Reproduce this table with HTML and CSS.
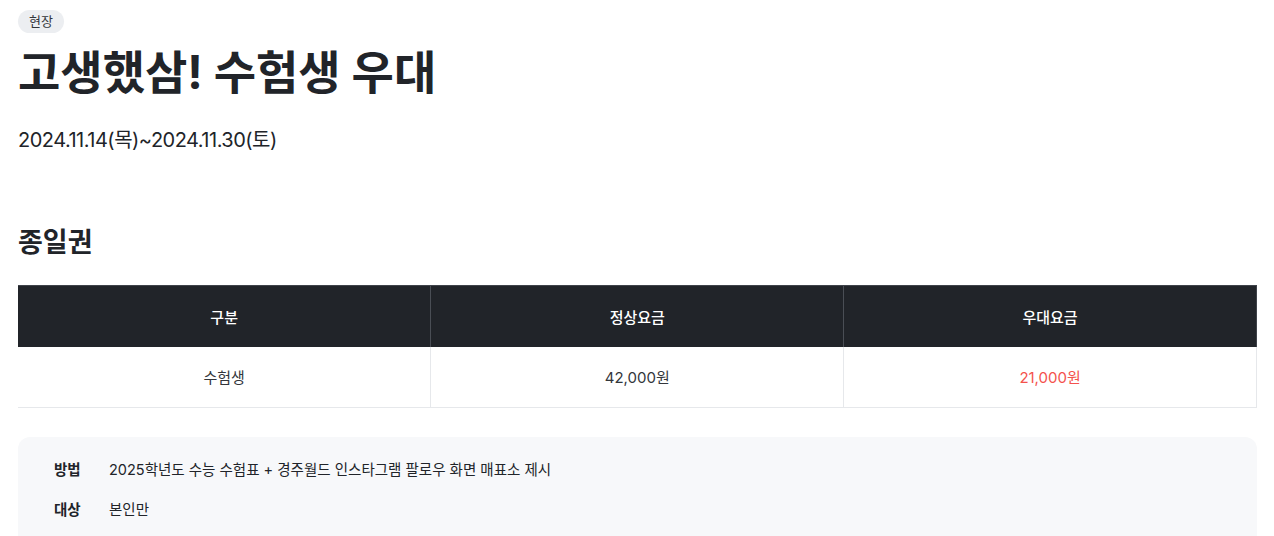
FILE: index.html
```html
<!DOCTYPE html>
<html lang="ko">
<head>
    <meta charset="UTF-8">
    <title>고생했삼! 수험생 우대</title>
    <link rel="stylesheet" href="styles.css">
</head>
<body>
    <div id="base">
        <span class="badge">현장</span>
        <h1 class="title">고생했삼! 수험생 우대</h1>
        <p class="period">2024.11.14(목)~2024.11.30(토)</p>

        <h2 class="section_title">종일권</h2>

        <table class="price_table">
            <thead>
                <tr>
                    <th>구분</th>
                    <th>정상요금</th>
                    <th>우대요금</th>
                </tr>
            </thead>
            <tbody>
                <tr>
                    <td>수험생</td>
                    <td>42,000원</td>
                    <td class="sale">21,000원</td>
                </tr>
            </tbody>
        </table>

        <div class="info_box">
            <div class="info_row">
                <span class="info_label">방법</span>
                <span class="info_text">2025학년도 수능 수험표 + 경주월드 인스타그램 팔로우 화면 매표소 제시</span>
            </div>
            <div class="info_row">
                <span class="info_label">대상</span>
                <span class="info_text">본인만</span>
            </div>
        </div>
    </div>
</body>
</html>
```

FILE: styles.css
```css
* {
    box-sizing: border-box;
    font-family: Inter, "Noto Sans CJK KR", sans-serif;
}

body {
    margin: 0;
    color: #212429;
    background: #fff;
}

#base {
    padding: 10px 17px 0 18px;
    display: flex;
    flex-direction: column;
    align-items: flex-start;
}

.badge {
    display: inline-block;
    background-color: #eceef1;
    color: #33363b;
    font-size: 13px;
    line-height: 23px;
    height: 23px;
    padding: 0 11px;
    border-radius: 12px;
}

.title {
    margin: 11px 0 0;
    font-size: 46px;
    font-weight: 700;
    line-height: 56px;
    letter-spacing: 0;
}

.period {
    margin: 26px 0 0;
    font-size: 20px;
    line-height: 28px;
    letter-spacing: -0.5px;
}

.section_title {
    margin: 72px 0 0;
    font-size: 27px;
    font-weight: 700;
    line-height: 34px;
    letter-spacing: 0;
}

.price_table {
    margin-top: 25px;
    width: 100%;
    border-collapse: collapse;
    table-layout: fixed;
    font-size: 15px;
}

.price_table th {
    background-color: #212429;
    color: #fff;
    font-weight: 500;
    height: 61px;
    border-top: 1px solid #3f434a;
    border-left: 1px solid #4a4e55;
}

.price_table th:first-child {
    border-left: none;
}

.price_table th:last-child {
    border-right: 1px solid #3f434a;
}

.price_table td {
    text-align: center;
    height: 61px;
    color: #33363b;
    border-bottom: 1px solid #e6e8eb;
    border-left: 1px solid #e6e8eb;
}

.price_table td:first-child {
    border-left: none;
}

.price_table td:last-child {
    border-right: 1px solid #e6e8eb;
}

.price_table td.sale {
    color: #f4524d;
}

.info_box {
    margin-top: 29px;
    width: 100%;
    background-color: #f7f8fa;
    border-radius: 12px 12px 0 0;
    padding: 20px 36px 14px;
    display: flex;
    flex-direction: column;
    gap: 14px;
}

.info_row {
    display: flex;
    font-size: 14.5px;
    line-height: 26px;
}

.info_label {
    width: 55px;
    font-weight: 700;
}

.info_text {
    color: #212429;
}
```
